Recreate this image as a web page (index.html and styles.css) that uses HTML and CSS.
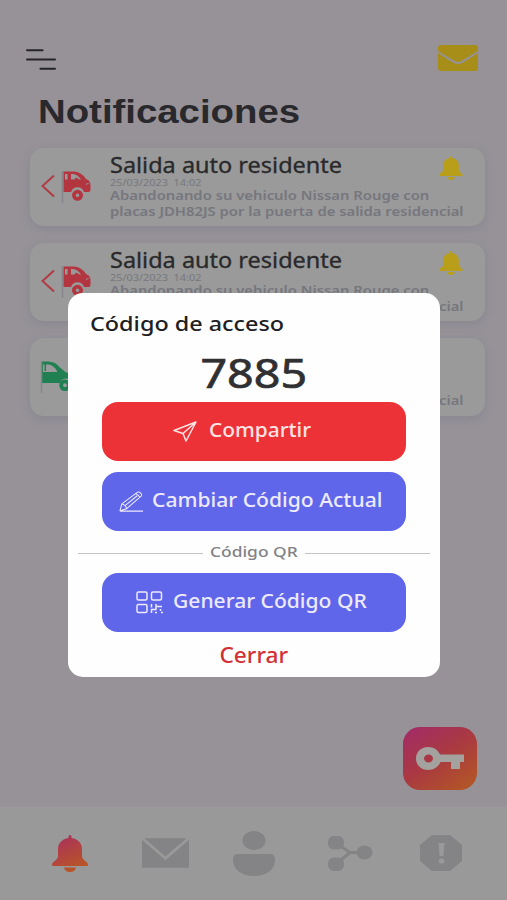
FILE: index.html
```html
<!DOCTYPE html>
<html lang="es">
<head>
<meta charset="utf-8">
<title>Notificaciones</title>
<link rel="stylesheet" href="styles.css">
</head>
<body>
<svg class="defs" width="0" height="0">
  <defs>
    <linearGradient id="warm" x1="0" y1="0" x2=".45" y2="1"><stop offset="0" stop-color="#a92d61"/><stop offset="1" stop-color="#b85428"/></linearGradient>
    <symbol id="bell" viewBox="0 0 36 37"><path d="M16.500 3V1.500a1.500 1.500 0 0 1 3 0V3C26 4 30 8.500 30 14v7c0 4 6 6 6 8.500 0 1-.5 1.500-1.500 1.500h-33C.5 31 0 30.500 0 29.500 0 27 6 25 6 21v-7C6 8.500 10 4 16.500 3zM12 32.500h12c-.5 3-3 4.500-6 4.500s-5.500-1.500-6-4.500z"/></symbol>
    <symbol id="car" viewBox="0 0 31 34">
      <path d="M2.500 1.500H12c5 0 10 2.500 13 7.500 3 1 4.500 3 4.500 6v4.500q0 2.500-2 2.500H23a6.800 6.800 0 0 0-13 0H2.500z"/>
      <path class="cut" d="M4 4h2.500v5.500H4zM10 4h2.500q4.500.8 7.500 5.500H18.500L15 7.500l-1.500 2H10zM29.500 12.500l-4.500 2.500v-1.200z"/>
      <path fill-rule="evenodd" d="M16.500 19.800a5.500 5.500 0 1 1 0 11 5.500 5.500 0 0 1 0-11zm0 3.700a1.800 1.800 0 1 0 0 3.600 1.800 1.800 0 0 0 0-3.600z"/>
      <path class="pole" d="M1.500 1v32"/>
    </symbol>
  </defs>
</svg>
<main class="app">
  <header class="top">
    <svg class="menu" viewBox="0 0 29 22"><path d="M1 1.500h15M1 10.500h27M14 19.500h14"/></svg>
    <svg class="mail" viewBox="0 0 40 26"><path d="M3 0h34q3 0 3 3v3L25 15q-5 4-10 0L0 6V3q0-3 3-3zM0 8l14 9q6 4 12 0l14-9v15q0 3-3 3H3q-3 0-3-3z"/></svg>
  </header>
  <h1><span class="fit">Notificaciones</span></h1>
  <section class="list">
    <article class="card">
      <svg class="arrow" viewBox="0 0 14 24"><path d="M13 1.500 1.500 12 13 22.500"/></svg>
      <svg class="car"><use href="#car"/></svg>
      <div class="copy">
        <h2><span class="fit">Salida auto residente</span></h2>
        <time><span class="fit">25/03/2023&nbsp; 14:02</span></time>
        <p><span class="fit">Abandonando su vehiculo Nissan Rouge con</span></p>
        <p><span class="fit">placas JDH82JS por la puerta de salida residencial</span></p>
      </div>
      <svg class="bell"><use href="#bell"/></svg>
    </article>
    <article class="card">
      <svg class="arrow" viewBox="0 0 14 24"><path d="M13 1.500 1.500 12 13 22.500"/></svg>
      <svg class="car"><use href="#car"/></svg>
      <div class="copy">
        <h2><span class="fit">Salida auto residente</span></h2>
        <time><span class="fit">25/03/2023&nbsp; 14:02</span></time>
        <p><span class="fit">Abandonando su vehiculo Nissan Rouge con</span></p>
        <p><span class="fit">placas JDH82JS por la puerta de salida residencial</span></p>
      </div>
      <svg class="bell"><use href="#bell"/></svg>
    </article>
    <article class="card entry">
      <svg class="car" viewBox="0 0 42 34">
        <path d="M2 1.500h6c5 0 9 2 12 6l6 5h12q3 0 3 4V23h-8a7 7 0 0 0-13 0H2z"/>
        <path class="cut" d="M3 4.500h1.500V11H3zM6 4.500h2.500q5 .5 8.500 6.500v1H3V11h3z"/>
        <path fill-rule="evenodd" d="M25 19.500a5.800 5.800 0 1 1 0 11.600 5.800 5.800 0 0 1 0-11.600zm0 3.800a2 2 0 1 0 0 4 2 2 0 0 0 0-4z"/>
        <path class="pole" d="M1.500 1v32"/>
      </svg>
      <div class="copy">
        <p><span class="fit">placas JDH82JS por la puerta de salida residencial</span></p>
      </div>
    </article>
  </section>
  <div class="fab-row">
    <button class="fab" aria-label="Código de acceso"><svg viewBox="0 0 50 26"><path fill-rule="evenodd" d="M13 1c6 0 10 3 12 7.500h24V16h-4v7h-9v-7H25.500C23.500 20.500 19 24 13 24 6 24 1 19 1 12.500S6 1 13 1zm.5 7.500a4.500 4 0 1 0 0 8 4.500 4 0 0 0 0-8z"/></svg></button>
  </div>
  <nav class="tabs">
    <svg class="t-bell" viewBox="0 0 36 37"><use href="#bell"/></svg>
    <svg class="t-mail" viewBox="0 0 48 30"><path d="M2.500 0h43L24 18.500zM0 1.500 24 22.500 48 1.500V30H0z"/></svg>
    <svg class="t-user" viewBox="0 0 44 45"><ellipse cx="22" cy="9.500" rx="11.500" ry="9.500"/><path d="M5 23h34q4 0 4 6c0 10-9 16-21 16S1 39 1 29q0-6 4-6z"/></svg>
    <svg class="t-share" viewBox="0 0 45 35"><path class="link" d="M8 7 22 16.500 8 28M22 16.500h14"/><rect x="0" y="0" width="16" height="13.500" rx="6"/><rect x="0" y="21.500" width="16" height="13.500" rx="6"/><ellipse cx="36.500" cy="16.500" rx="8" ry="7"/></svg>
    <svg class="t-alert" viewBox="0 0 42 36"><path fill-rule="evenodd" d="M12 0h18l12 10v16L30 36H12L0 26V10zM18.500 8l1 13h4l1-13zm3 15.500a3 2.500 0 1 0 0 5 3 2.500 0 0 0 0-5z"/></svg>
  </nav>
</main>
<div class="modal" role="dialog">
  <h3><span class="fit">Código de acceso</span></h3>
  <div class="code"><span class="fit">7885</span></div>
  <button class="btn share"><svg viewBox="0 0 24 21"><path d="M1 9.500 23 1 13 20l-3-7.500zM10 12.500 23 1"/></svg><span class="fit">Compartir</span></button>
  <button class="btn change"><svg viewBox="0 0 26 23"><path d="m1 21 2-7L19 2c2-1.500 6 2 4 4L8 19zM3 14q4 1 5 5M17 3.500q4 1 4.500 4.500M6 16 19 5.500M1 21.500h24"/></svg><span class="fit">Cambiar Código Actual</span></button>
  <div class="divider"><div class="label"><span class="fit">Código QR</span></div></div>
  <button class="btn qr"><svg viewBox="0 0 27 23"><rect x="1" y="1" width="10" height="8" rx="1.500"/><rect x="15.500" y="1" width="10" height="8" rx="1.500"/><rect x="1" y="13.500" width="10" height="8" rx="1.500"/><path d="M15.500 13v3.500M20 13v5.500h-4.500v3.500M19 21.500h2M20 15.500h6M24.500 18v2M25 21.500h2"/></svg><span class="fit">Generar Código QR</span></button>
  <div class="close"><span class="fit">Cerrar</span></div>
</div>
</body>
</html>
```
FILE: styles.css
```css
* { box-sizing: border-box; }
body { margin: 0; width: 507px; height: 900px; overflow: hidden; position: relative; font-family: "Noto Sans", "Open Sans", sans-serif; }
.defs { position: absolute; }
h1, h2, h3, p { margin: 0; font-weight: 500; }
button { border: 0; padding: 0; font-family: inherit; }
.fit { display: inline-block; white-space: nowrap; transform-origin: 0 50%; }
.app { height: 900px; display: flex; flex-direction: column; background: #969298; }
.top { display: flex; justify-content: space-between; align-items: flex-start; padding: 45px 29px 0 26px; height: 90px; }
.menu { width: 30px; height: 24px; margin-top: 3px; fill: none; stroke: #252429; stroke-width: 2; stroke-linecap: round; }
.mail { width: 40px; height: 26px; fill: #a78e18; }
h1 { height: 58px; padding-left: 38px; font: bold 33px/44px "Liberation Sans", sans-serif; color: #29282c; }
h1 .fit { transform: scaleX(1.162); }
.list { display: flex; flex-direction: column; gap: 17px; padding: 0 22px 0 30px; }
.card { height: 78px; display: flex; position: relative; border-radius: 14px; background: #999a99; box-shadow: 0 3px 8px rgba(115, 115, 133, .35); }
.arrow { width: 14px; height: 24px; margin: 26px 6px 0 11px; fill: none; stroke: #b13b45; stroke-width: 2; }
.car { width: 31px; height: 34px; margin: 22px 0 0; fill: #b23540; flex: none; }
.cut { fill: #999a99; }
.pole { fill: none; stroke: #85868b; stroke-width: 1.5; }
.copy { margin-left: 18px; padding-top: 4px; width: 360px; }
h2 { font-size: 21px; line-height: 27px; height: 26px; color: #29292b; font-weight: 400; -webkit-text-stroke: .3px #29292b; }
h2 .fit { transform: scaleX(1.118); }
time { display: block; font-size: 9px; line-height: 10px; height: 9px; color: #77777d; }
time .fit { transform: scaleX(1.21); }
.card p { font-size: 13px; line-height: 16px; height: 16px; color: #76767e; font-weight: 600; }
.card p .fit { transform: scaleX(1.14); }
.bell { position: absolute; right: 22px; top: 8px; width: 24px; height: 24px; fill: #b99e19; }
.entry .car { width: 42px; margin: 22px 0 0 10px; fill: #218052; }
.entry .copy { margin-left: 28px; padding-top: 54px; }
.fab-row { display: flex; justify-content: flex-end; margin: auto 30px 17px 0; }
.fab { width: 74px; height: 63px; border-radius: 17px; background: linear-gradient(145deg, #a32c65 5%, #aa3a40 50%, #b45b22); display: flex; align-items: center; justify-content: center; }
.fab svg { width: 50px; height: 26px; fill: #a4a29e; }
.tabs { height: 93px; flex: none; background: #999999; display: flex; align-items: flex-start; padding-left: 52px; fill: #848486; }
.t-bell { width: 36px; height: 37px; margin-top: 28px; fill: url(#warm); }
.t-mail { width: 47px; height: 30px; margin: 31px 0 0 54px; }
.t-user { width: 44px; height: 45px; margin: 24px 0 0 43px; }
.t-share { width: 45px; height: 35px; margin: 29px 0 0 52px; }
.link { fill: none; stroke: #848486; stroke-width: 3; }
.t-alert { width: 42px; height: 36px; margin: 28px 0 0 47px; }
.modal { position: absolute; left: 68px; top: 293px; width: 372px; height: 384px; border-radius: 15px; background: #fefefe; display: flex; flex-direction: column; align-items: center; }
.modal .fit { transform-origin: 50% 50%; }
h3 { align-self: flex-start; padding: 17px 0 0 22px; font-size: 20px; line-height: 28px; height: 52px; color: #202022; }
.modal h3 .fit { transform-origin: 0 50%; transform: scaleX(1.168); }
.code { font-size: 40px; line-height: 56px; height: 57px; color: #303033; font-weight: 400; -webkit-text-stroke: .7px #303033; }
.code .fit { transform: scaleX(1.165); }
.btn { width: 304px; height: 59px; flex: none; border-radius: 16px; display: flex; align-items: center; justify-content: flex-start; color: #edeaff; font-size: 19px; line-height: 26px; font-weight: 500; background: #6066e9; }
.btn svg { fill: none; stroke: currentColor; stroke-width: 1.5; flex: none; stroke-linejoin: round; }
.modal .btn .fit { transform-origin: 0 50%; margin-top: -4px; }
.share { background: #ed3237; color: #ffe4e3; padding-left: 71px; gap: 12px; }
.share svg { width: 24px; height: 21px; }
.share .fit { transform: scaleX(1.1); }
.change { margin-top: 11px; padding-left: 17px; gap: 8px; }
.change svg { width: 25px; height: 23px; stroke-width: 1.1; }
.change .fit { transform: scaleX(1.11); }
.divider { align-self: stretch; display: flex; align-items: center; height: 42px; padding: 0 10px; font-size: 15px; color: #828286; }
.divider::before, .divider::after { content: ""; flex: 1; height: 1px; margin-top: 2px; background: #c4c4c4; }
.label { width: 102px; display: flex; justify-content: center; margin-top: -2px; font-weight: 500; }
.label .fit { transform: scaleX(1.16); }
.qr { padding-left: 34px; gap: 10px; }
.qr svg { width: 27px; height: 23px; }
.qr .fit { transform: scaleX(1.108); }
.close { margin-top: 8px; font-size: 21px; line-height: 30px; color: #d33136; font-weight: 500; }
.close .fit { transform: scaleX(1.08); }
```
